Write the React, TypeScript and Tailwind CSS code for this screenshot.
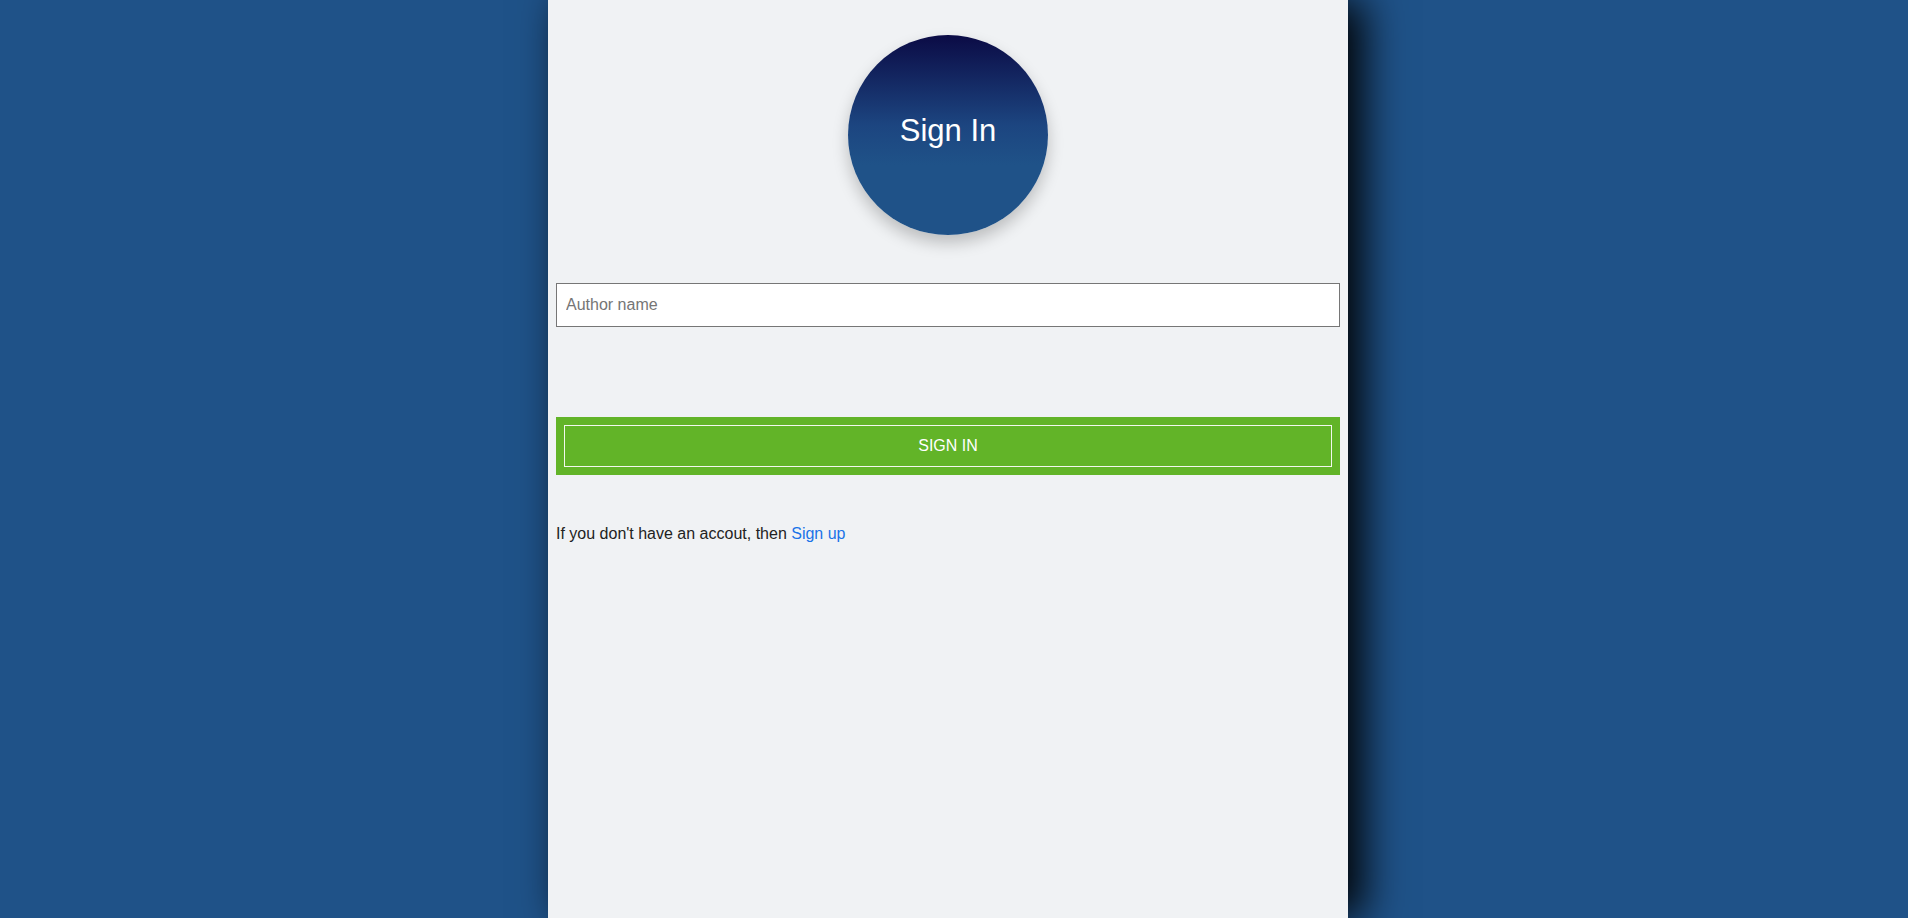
import React from 'react';

const SignInPage: React.FC = () => {
  return (
    <div className="min-h-screen bg-[#1f5288] flex justify-center pr-3 font-['Liberation_Sans',Arial,sans-serif]">
      <div className="w-[800px] bg-[#f0f2f4] px-2 shadow-[15px_0_40px_rgba(0,0,0,1)]">
        {/* round title badge */}
        <div className="mt-[35px] mx-auto w-[200px] h-[200px] rounded-full bg-[linear-gradient(to_bottom,#0b0b45_0%,#1c4580_45%,#1f5288_65%,#1f5288_100%)] shadow-[0_8px_16px_rgba(0,0,0,0.22)] flex items-center justify-center pb-2">
          <span className="text-[31px] text-white">Sign In</span>
        </div>

        <input
          type="text"
          placeholder="Author name"
          className="mt-12 block w-full h-[44px] bg-white border border-[#767676] px-[9px] text-base text-[#222] placeholder:text-[#757575] outline-none"
        />

        <button className="mt-[90px] block w-full h-[58px] bg-[#62b428] p-2">
          <div className="h-full border border-[#f2f7ee] flex items-center justify-center text-base text-white uppercase">
            Sign in
          </div>
        </button>

        <p className="mt-[47px] text-base text-[#222]">
          If you don't have an accout, then{' '}
          <a href="#" className="text-[#1a73e8]">Sign up</a>
        </p>
      </div>
    </div>
  );
};

export default SignInPage;
